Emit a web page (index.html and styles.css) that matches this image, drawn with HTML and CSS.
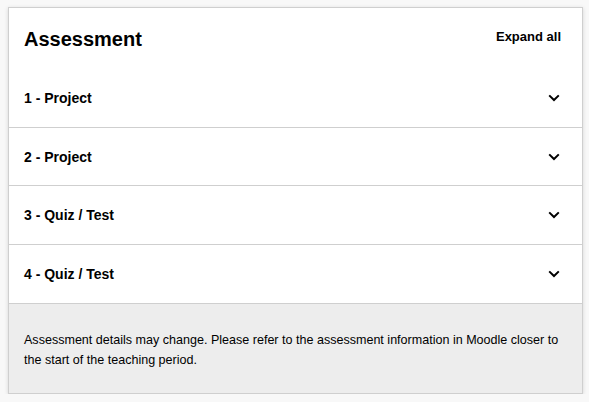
FILE: index.html
```html
<!DOCTYPE html>
<html lang="en">
<head>
<meta charset="utf-8">
<title>Assessment</title>
<link rel="stylesheet" href="styles.css">
</head>
<body>
<section class="card">
  <header class="card-head">
    <h2 class="title">Assessment</h2>
    <button class="expand">Expand all</button>
  </header>
  <ul class="items">
    <li class="item"><span>1 - Project</span><svg class="chev" viewBox="0 0 12 8" width="12" height="8"><path d="M1.2 1.4 L6 6 L10.8 1.4" fill="none" stroke="#000" stroke-width="2"/></svg></li>
    <li class="item"><span>2 - Project</span><svg class="chev" viewBox="0 0 12 8" width="12" height="8"><path d="M1.2 1.4 L6 6 L10.8 1.4" fill="none" stroke="#000" stroke-width="2"/></svg></li>
    <li class="item"><span>3 - Quiz / Test</span><svg class="chev" viewBox="0 0 12 8" width="12" height="8"><path d="M1.2 1.4 L6 6 L10.8 1.4" fill="none" stroke="#000" stroke-width="2"/></svg></li>
    <li class="item"><span>4 - Quiz / Test</span><svg class="chev" viewBox="0 0 12 8" width="12" height="8"><path d="M1.2 1.4 L6 6 L10.8 1.4" fill="none" stroke="#000" stroke-width="2"/></svg></li>
  </ul>
  <footer class="note">Assessment details may change. Please refer to the assessment information in Moodle closer to the start of the teaching period.</footer>
</section>
</body>
</html>
```
FILE: styles.css
```css
html, body {
  margin: 0;
  background: #f8f8f8;
}
body {
  padding: 7px 6px 0 8px;
  font-family: "Liberation Sans", Arial, sans-serif;
  color: #000;
}
.card {
  background: #fff;
  border: 1px solid #cfcfcf;
  box-shadow: 0 1px 4px rgba(0, 0, 0, 0.14);
}
.card-head {
  display: flex;
  justify-content: space-between;
  align-items: flex-start;
  padding: 20px 21px 0 15px;
  height: 41px;
}
.title {
  margin: 0;
  font-size: 20px;
  font-weight: bold;
  line-height: 23px;
}
.expand {
  margin: 1px 0 0;
  padding: 0;
  border: 0;
  background: none;
  font-family: inherit;
  font-size: 13px;
  font-weight: bold;
  line-height: 15px;
  color: #000;
}
.items {
  list-style: none;
  margin: 0;
  padding: 0;
}
.item {
  display: flex;
  justify-content: space-between;
  align-items: center;
  height: 58px;
  padding: 0 22px 0 15px;
  border-bottom: 1px solid #cfcfcf;
  font-size: 14px;
  font-weight: bold;
}
.item:nth-child(2) { height: 57px; }
.chev { display: block; }
.note {
  background: #ededed;
  padding: 26px 15px 23px;
  font-size: 12.55px;
  line-height: 20px;
}
```
